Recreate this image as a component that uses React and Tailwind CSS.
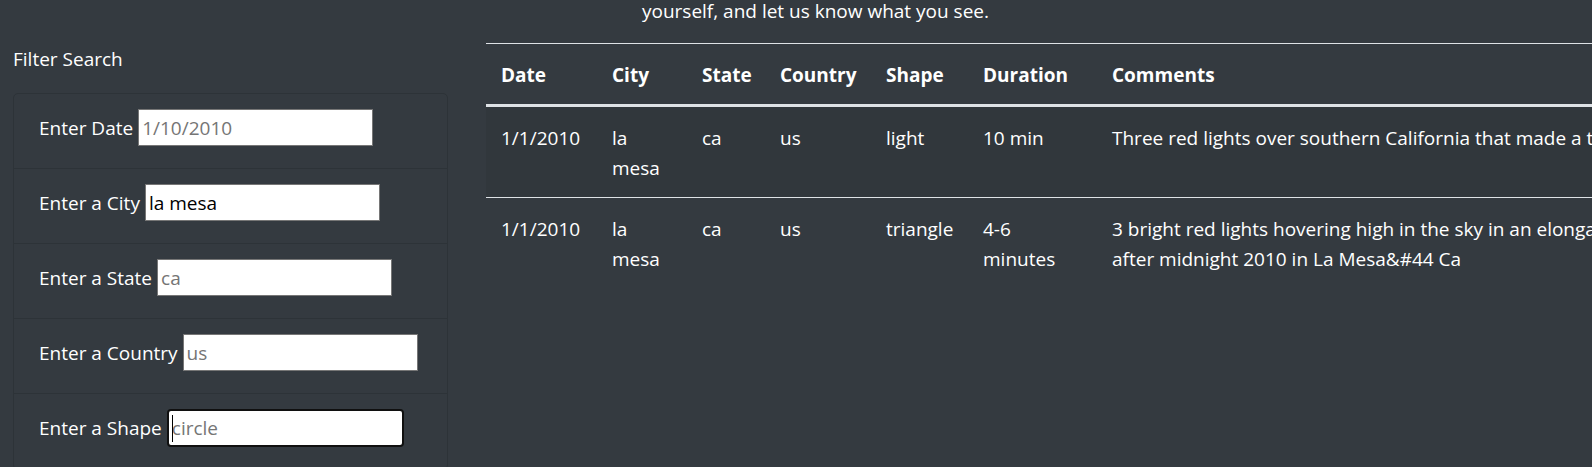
const filters = [
  { label: "Enter Date", placeholder: "1/10/2010" },
  { label: "Enter a City", value: "la mesa" },
  { label: "Enter a State", placeholder: "ca" },
  { label: "Enter a Country", placeholder: "us" },
  { label: "Enter a Shape", placeholder: "circle", focused: true },
];

const rows = [
  {
    date: "1/1/2010",
    city: "la mesa",
    state: "ca",
    country: "us",
    shape: "light",
    duration: "10 min",
    comments: ["Three red lights over southern California that made a triangle formation and moved slowly to the east"],
  },
  {
    date: "1/1/2010",
    city: "la mesa",
    state: "ca",
    country: "us",
    shape: "triangle",
    duration: "4-6 minutes",
    comments: [
      "3 bright red lights hovering high in the sky in an elongated triangle formation seen shortly",
      "after midnight 2010 in La Mesa&#44 Ca",
    ],
  },
];

function FilterInput({ item }) {
  if (item.focused) {
    return (
      <div className="relative">
        <input
          readOnly
          placeholder={item.placeholder}
          className="w-[237px] h-[38px] border-2 border-[#101010] rounded-[4px] bg-white px-[3px] text-[19px] text-black placeholder:text-[#757575] outline-none"
        />
        <span className="absolute left-[5px] top-[6px] h-[27px] w-px bg-black" />
      </div>
    );
  }
  return (
    <input
      readOnly
      defaultValue={item.value}
      placeholder={item.placeholder}
      className="w-[235px] h-[37px] border border-[#767676] bg-white px-[3px] text-[19px] text-black placeholder:text-[#757575] outline-none"
    />
  );
}

export default function App() {
  const th = "px-[15px] pt-[16px] pb-[14px] font-bold border-t border-b-[3px] border-[#dee2e6]";
  return (
    <div className="flex flex-col w-[1592px] h-[467px] overflow-hidden bg-[#343a40] text-white text-[19px] leading-[30px] font-['Open_Sans',sans-serif]">
      <p className="w-[1631px] shrink-0 text-center -mt-[4px] mb-[17px]">
        yourself, and let us know what you see.
      </p>

      <div className="flex items-start shrink-0">
        <div className="w-[486px] shrink-0 pl-[13px]">
          <div className="pt-px">Filter Search</div>
          <ul className="mt-[19px] w-[435px] border border-[#2d3338] rounded-[5px]">
            {filters.map((f, i) => (
              <li
                key={f.label}
                className={
                  "flex items-baseline gap-[5px] whitespace-nowrap pt-[15px] pb-[22px] px-[25px] " +
                  (i > 0 ? "border-t border-[#2d3338]" : "")
                }
              >
                <span>{f.label}</span>
                <FilterInput item={f} />
              </li>
            ))}
          </ul>
        </div>

        <table className="table-fixed border-collapse w-[1511px] shrink-0 text-left">
          <thead>
            <tr>
              <th className={"w-[111px] " + th}>Date</th>
              <th className={"w-[90px] " + th}>City</th>
              <th className={"w-[78px] " + th}>State</th>
              <th className={"w-[106px] " + th}>Country</th>
              <th className={"w-[97px] " + th}>Shape</th>
              <th className={"w-[129px] " + th}>Duration</th>
              <th className={"w-[900px] " + th}>Comments</th>
            </tr>
          </thead>
          <tbody>
            {rows.map((r, i) => {
              const cell = "px-[15px] pt-[16px] pb-[14px] align-top " + (i > 0 ? "border-t border-[#dee2e6]" : "");
              return (
                <tr key={i} className={i % 2 === 0 ? "bg-black/5" : ""}>
                  <td className={cell}>{r.date}</td>
                  <td className={cell}>{r.city}</td>
                  <td className={cell}>{r.state}</td>
                  <td className={cell}>{r.country}</td>
                  <td className={cell}>{r.shape}</td>
                  <td className={cell}>{r.duration}</td>
                  <td className={cell + " whitespace-nowrap"}>
                    {r.comments.map((line) => (
                      <div key={line}>{line}</div>
                    ))}
                  </td>
                </tr>
              );
            })}
          </tbody>
        </table>
      </div>
    </div>
  );
}
